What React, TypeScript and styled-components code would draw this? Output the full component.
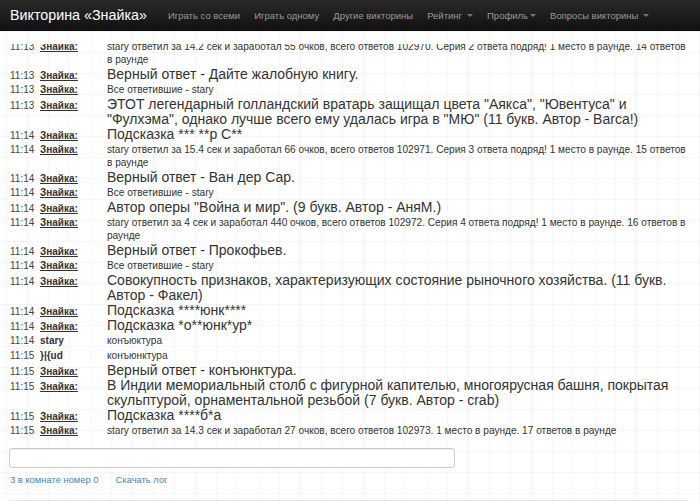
import styled, { createGlobalStyle } from "styled-components";

const GlobalStyle = createGlobalStyle`
  html, body {
    margin: 0;
    padding: 0;
  }
  body {
    font-family: "Liberation Sans", Arial, sans-serif;
    color: #333;
    background-color: #fff;
    background-image:
      linear-gradient(to right, rgba(0, 0, 0, 0.035) 1px, transparent 1px),
      linear-gradient(to bottom, rgba(0, 0, 0, 0.035) 1px, transparent 1px);
    background-size: 21px 21px;
    background-position: 6px 10px;
  }
`;

type Message = {
  time: string;
  author: string;
  bot?: boolean;
  big?: boolean;
  text: string;
};

const messages: Message[] = [
  { time: "11:13", author: "Знайка:", bot: true, text: "Все ответившие - stary" },
  {
    time: "11:13",
    author: "Знайка:",
    bot: true,
    text: "stary ответил за 14.2 сек и заработал 55 очков, всего ответов 102970. Серия 2 ответа подряд! 1 место в раунде. 14 ответов в раунде",
  },
  { time: "11:13", author: "Знайка:", bot: true, big: true, text: "Верный ответ - Дайте жалобную книгу." },
  { time: "11:13", author: "Знайка:", bot: true, text: "Все ответившие - stary" },
  {
    time: "11:13",
    author: "Знайка:",
    bot: true,
    big: true,
    text: 'ЭТОТ легендарный голландский вратарь защищал цвета "Аякса", "Ювентуса" и "Фулхэма", однако лучше всего ему удалась игра в "МЮ" (11 букв. Автор - Barca!)',
  },
  { time: "11:14", author: "Знайка:", bot: true, big: true, text: "Подсказка *** **р С**" },
  {
    time: "11:14",
    author: "Знайка:",
    bot: true,
    text: "stary ответил за 15.4 сек и заработал 66 очков, всего ответов 102971. Серия 3 ответа подряд! 1 место в раунде. 15 ответов в раунде",
  },
  { time: "11:14", author: "Знайка:", bot: true, big: true, text: "Верный ответ - Ван дер Сар." },
  { time: "11:14", author: "Знайка:", bot: true, text: "Все ответившие - stary" },
  { time: "11:14", author: "Знайка:", bot: true, big: true, text: 'Автор оперы "Война и мир". (9 букв. Автор - АняМ.)' },
  {
    time: "11:14",
    author: "Знайка:",
    bot: true,
    text: "stary ответил за 4 сек и заработал 440 очков, всего ответов 102972. Серия 4 ответа подряд! 1 место в раунде. 16 ответов в раунде",
  },
  { time: "11:14", author: "Знайка:", bot: true, big: true, text: "Верный ответ - Прокофьев." },
  { time: "11:14", author: "Знайка:", bot: true, text: "Все ответившие - stary" },
  {
    time: "11:14",
    author: "Знайка:",
    bot: true,
    big: true,
    text: "Совокупность признаков, характеризующих состояние рыночного хозяйства. (11 букв. Автор - Факел)",
  },
  { time: "11:14", author: "Знайка:", bot: true, big: true, text: "Подсказка ****юнк****" },
  { time: "11:14", author: "Знайка:", bot: true, big: true, text: "Подсказка *о**юнк*ур*" },
  { time: "11:14", author: "stary", text: "конъюктура" },
  { time: "11:15", author: "}|{ud", text: "конъюнктура" },
  { time: "11:15", author: "Знайка:", bot: true, big: true, text: "Верный ответ - конъюнктура." },
  {
    time: "11:15",
    author: "Знайка:",
    bot: true,
    big: true,
    text: "В Индии мемориальный столб с фигурной капителью, многоярусная башня, покрытая скульптурой, орнаментальной резьбой (7 букв. Автор - crab)",
  },
  { time: "11:15", author: "Знайка:", bot: true, big: true, text: "Подсказка ****б*а" },
  {
    time: "11:15",
    author: "Знайка:",
    bot: true,
    text: "stary ответил за 14.3 сек и заработал 27 очков, всего ответов 102973. 1 место в раунде. 17 ответов в раунде",
  },
];

const navItems = [
  { label: "Играть со всеми" },
  { label: "Играть одному" },
  { label: "Другие викторины" },
  { label: "Рейтинг", dropdown: true },
  { label: "Профиль", dropdown: true, tight: true },
  { label: "Вопросы викторины", dropdown: true },
];

export default function App() {
  return (
    <>
      <GlobalStyle />
      <Navbar>
        <Brand>Викторина «Знайка»</Brand>
        <NavList>
          {navItems.map((item) => (
            <NavItem key={item.label}>
              {item.label}
              {item.dropdown && <Caret $tight={item.tight} />}
            </NavItem>
          ))}
        </NavList>
      </Navbar>

      <Main>
        <Log>
          {messages.map((m, i) => (
            <Row key={i}>
              <Time>{m.time}</Time>
              <Author $bot={m.bot}>{m.author}</Author>
              <Text $big={m.big}>{m.text}</Text>
            </Row>
          ))}
        </Log>

        <ChatInput type="text" />

        <Links>
          <Link href="#">3 в комнате номер 0</Link>
          <Link href="#">Скачать лог</Link>
        </Links>

        <Divider />
      </Main>
    </>
  );
}

const Navbar = styled.div`
  display: flex;
  align-items: center;
  height: 31px;
  padding: 0 10px;
  background-color: #1b1b1b;
  background-image: linear-gradient(to bottom, #2a2a2a, #111111);
  border-bottom: 1px solid #0a0a0a;
  box-sizing: border-box;
`;

const Brand = styled.div`
  color: #ffffff;
  font-size: 14.3px;
  margin-right: 14px;
  white-space: nowrap;
`;

const NavList = styled.div`
  display: flex;
  align-items: center;
`;

const NavItem = styled.div`
  display: flex;
  align-items: center;
  padding: 0 7px;
  color: #9a9a9a;
  font-size: 9.5px;
  white-space: nowrap;
`;

const Caret = styled.span<{ $tight?: boolean }>`
  display: inline-block;
  width: 0;
  height: 0;
  margin-left: ${(p) => (p.$tight ? "2px" : "5px")};
  border-top: 3px solid #777;
  border-left: 3px solid transparent;
  border-right: 3px solid transparent;
`;

const Main = styled.div`
  padding: 13px 14px 0 10px;
`;

const Log = styled.div`
  display: flex;
  flex-direction: column;
  justify-content: flex-end;
  height: 394px;
  overflow: hidden;
`;

const Row = styled.div`
  display: grid;
  grid-template-columns: 30px 67px 1fr;
  align-items: baseline;
  flex-shrink: 0;
`;

const Time = styled.span`
  font-size: 10px;
  color: #444;
`;

const Author = styled.span<{ $bot?: boolean }>`
  font-size: 10px;
  font-weight: bold;
  color: #333;
  text-decoration: ${(p) => (p.$bot ? "underline" : "none")};
`;

const Text = styled.span<{ $big?: boolean }>`
  font-size: ${(p) => (p.$big ? "14px" : "10.1px")};
  line-height: ${(p) => (p.$big ? "15px" : "13px")};
  padding: ${(p) => (p.$big ? "0" : "1px 0")};
  color: #333;
`;

const ChatInput = styled.input`
  display: block;
  width: 446px;
  height: 20px;
  margin: 10px 0 0 -1px;
  padding: 2px 6px;
  border: 1px solid #cccccc;
  border-radius: 3px;
  box-shadow: inset 0 1px 1px rgba(0, 0, 0, 0.075);
  box-sizing: border-box;
  background: #fff;
`;

const Links = styled.div`
  display: flex;
  gap: 17px;
  margin-top: 6px;
`;

const Link = styled.a`
  color: #3a87c8;
  font-size: 9.4px;
  text-decoration: none;
`;

const Divider = styled.hr`
  margin: 15px -4px 0 0;
  border: 0;
  border-top: 1px solid #e8e8e8;
`;
